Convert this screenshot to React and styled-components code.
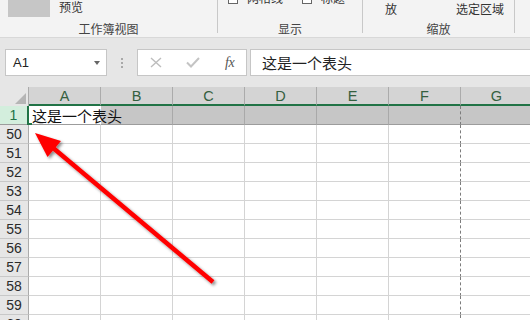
import React from 'react';
import styled, { createGlobalStyle } from 'styled-components';

const Global = createGlobalStyle`
  html, body { margin: 0; padding: 0; }
  body {
    width: 530px; height: 320px; overflow: hidden; background: #fff;
    font-family: "Noto Sans CJK SC", "Noto Sans", sans-serif;
  }
`;

const Page = styled.div`
  position: relative;
  width: 530px;
  height: 320px;
  overflow: hidden;
  display: flex;
  flex-direction: column;
`;

/* ---------- Ribbon ---------- */
const Ribbon = styled.div`
  flex: none;
  height: 37px;
  background: #f3f3f3;
  border-bottom: 1px solid #d8d8d8;
  display: flex;
  overflow: hidden;
`;

const Group = styled.div`
  flex: none;
  width: ${p => p.$w}px;
  display: flex;
  flex-direction: column;
`;

const GroupTop = styled.div`
  height: 22px;
  display: flex;
  align-items: flex-start;
  padding-left: ${p => p.$pl || 0}px;
  gap: ${p => p.$gap || 0}px;
`;

const GroupLabel = styled.div`
  height: 14px;
  line-height: 14px;
  font-size: 12px;
  color: #444;
  text-align: center;
`;

const Sep = styled.div`
  flex: none;
  width: 1px;
  height: 33px;
  background: #c8c8c8;
`;

const IconTile = styled.div`
  width: 42px;
  height: 17px;
  background: #c6c6c6;
`;

const RibbonText = styled.span`
  font-size: 12px;
  line-height: 14px;
  color: #333;
  margin-top: ${p => p.$mt || 0}px;
  white-space: nowrap;
`;

const CheckRow = styled.div`
  display: flex;
  align-items: center;
  height: 14px;
  margin-top: -9px;
  margin-right: ${p => p.$mr || 0}px;
  gap: 9px;
`;

const CheckBox = styled.span`
  width: 8px;
  height: 8px;
  margin-top: 2px;
  border: 1px solid #666;
  background: #fff;
`;

/* ---------- Formula bar ---------- */
const FormulaArea = styled.div`
  flex: none;
  height: 49px;
  background: #e6e6e6;
  display: flex;
  align-items: flex-start;
  padding: 11px 0 0 5px;
  box-sizing: border-box;
`;

const NameBox = styled.div`
  width: 102px;
  height: 27px;
  box-sizing: border-box;
  background: #fff;
  border: 1px solid #c6c6c6;
  display: flex;
  align-items: center;
  padding: 0 6px 0 7px;
  font-family: "Liberation Sans", Arial, sans-serif;
  font-size: 13px;
  color: #222;
`;

const Drop = styled.span`
  margin-left: auto;
  width: 0;
  height: 0;
  border-left: 3.5px solid transparent;
  border-right: 3.5px solid transparent;
  border-top: 4px solid #666;
`;

const Dots = styled.div`
  width: 30px;
  height: 27px;
  display: flex;
  flex-direction: column;
  align-items: center;
  justify-content: center;
  gap: 2px;
  & > span {
    width: 2px;
    height: 2px;
    background: #a8a8a8;
  }
`;

const FxBox = styled.div`
  width: 110px;
  height: 27px;
  box-sizing: border-box;
  background: #fff;
  border: 1px solid #c6c6c6;
  display: flex;
  align-items: center;
  padding-left: 12px;
  gap: 24px;
`;

const Fx = styled.span`
  font-family: "Liberation Serif", "Times New Roman", serif;
  font-style: italic;
  font-size: 14px;
  color: #555;
  margin-left: 1px;
  letter-spacing: -0.5px;
`;

const FormulaInput = styled.div`
  flex: 1;
  margin-left: 3px;
  height: 27px;
  box-sizing: border-box;
  background: #fff;
  border: 1px solid #c6c6c6;
  border-right: none;
  display: flex;
  align-items: center;
  padding-left: 11px;
  font-size: 15px;
  color: #222;
  white-space: nowrap;
`;

/* ---------- Grid ---------- */
const Sheet = styled.div`
  flex: 1;
  display: flex;
  flex-direction: column;
  overflow: hidden;
`;

const Row = styled.div`
  flex: none;
  display: flex;
  height: 19px;
`;

const Corner = styled.div`
  flex: none;
  width: 29px;
  box-sizing: border-box;
  background: #e6e6e6;
  border-right: 1px solid #ababab;
  display: flex;
  align-items: flex-end;
  justify-content: flex-end;
  padding: 0 2px 2px 0;
`;

const ColHead = styled.div`
  flex: none;
  width: 72px;
  box-sizing: border-box;
  background: #d4d4d4;
  border-right: 1px solid #ababab;
  border-bottom: 2px solid #217346;
  display: flex;
  align-items: center;
  justify-content: center;
  padding-top: 1px;
  font-family: "Liberation Sans", Arial, sans-serif;
  font-size: 14.5px;
  color: #35603f;
`;

const RowHead = styled.div`
  flex: none;
  width: 29px;
  box-sizing: border-box;
  background: ${p => (p.$sel ? '#d3eedd' : '#e6e6e6')};
  border-right: ${p => (p.$sel ? '2px solid #217346' : '1px solid #ababab')};
  border-bottom: 1px solid ${p => (p.$sel ? '#9c9c9c' : '#c8c8c8')};
  display: flex;
  align-items: center;
  justify-content: center;
  font-family: "Liberation Sans", Arial, sans-serif;
  font-size: 14px;
  color: ${p => (p.$sel ? '#217346' : '#2a2a2a')};
`;

const Cell = styled.div`
  flex: none;
  width: 72px;
  box-sizing: border-box;
  background: ${p => (p.$sel ? '#c6c6c6' : '#fff')};
  border-right: 1px ${p => (p.$dash ? 'dashed #7c7c7c' : `solid ${p.$sel ? '#a9a9a9' : '#d4d4d4'}`)};
  border-bottom: 1px solid ${p => (p.$sel ? '#9c9c9c' : '#d4d4d4')};
`;

const ActiveCell = styled.div`
  flex: none;
  width: 72px;
  box-sizing: border-box;
  position: relative;
  background: #fff;
  border-right: 1px solid #fff;
  border-bottom: 1px solid #9c9c9c;
  display: flex;
  align-items: center;
  padding-left: 3px;
  white-space: nowrap;
  font-size: 15px;
  color: #111;
  &::after {
    content: '';
    position: absolute;
    left: -2px;
    bottom: -1px;
    width: 5px;
    height: 2px;
    background: #217346;
  }
`;

const Overflow = styled.span`
  position: relative;
  z-index: 1;
`;

const ArrowLayer = styled.svg`
  position: absolute;
  left: 0;
  top: 0;
  pointer-events: none;
`;

const cols = ['A', 'B', 'C', 'D', 'E', 'F', 'G'];
const rows = [50, 51, 52, 53, 54, 55, 56, 57, 58, 59, 60];

export default function App() {
  return (
    <Page>
      <Global />
      <Ribbon>
        <Group $w={217}>
          <GroupTop $pl={8} $gap={9}>
            <IconTile />
            <RibbonText>预览</RibbonText>
          </GroupTop>
          <GroupLabel>工作簿视图</GroupLabel>
        </Group>
        <Sep />
        <Group $w={144}>
          <GroupTop $pl={10}>
            <CheckRow $mr={19}>
              <CheckBox />
              <RibbonText>网格线</RibbonText>
            </CheckRow>
            <CheckRow>
              <CheckBox />
              <RibbonText>标题</RibbonText>
            </CheckRow>
          </GroupTop>
          <GroupLabel>显示</GroupLabel>
        </Group>
        <Sep />
        <Group $w={151}>
          <GroupTop $pl={22} $gap={59}>
            <RibbonText $mt={2}>放</RibbonText>
            <RibbonText $mt={2}>选定区域</RibbonText>
          </GroupTop>
          <GroupLabel>缩放</GroupLabel>
        </Group>
        <Sep />
      </Ribbon>

      <FormulaArea>
        <NameBox>
          A1
          <Drop />
        </NameBox>
        <Dots>
          <span />
          <span />
          <span />
        </Dots>
        <FxBox>
          <svg width="12" height="11" viewBox="0 0 12 11">
            <path d="M1 1 L11 10 M11 1 L1 10" stroke="#bdbdbd" strokeWidth="1.4" fill="none" />
          </svg>
          <svg width="14" height="11" viewBox="0 0 14 11">
            <path d="M1 5.5 L5 9.5 L13 1" stroke="#c4c4c4" strokeWidth="2" fill="none" />
          </svg>
          <Fx>fx</Fx>
        </FxBox>
        <FormulaInput>这是一个表头</FormulaInput>
      </FormulaArea>

      <Sheet>
        <Row>
          <Corner>
            <svg width="11" height="11" viewBox="0 0 11 11">
              <path d="M11 0 L11 11 L0 11 Z" fill="#b5b5b5" />
            </svg>
          </Corner>
          {cols.map(c => (
            <ColHead key={c}>{c}</ColHead>
          ))}
        </Row>
        <Row>
          <RowHead $sel>1</RowHead>
          <ActiveCell>
            <Overflow>这是一个表头</Overflow>
          </ActiveCell>
          {cols.slice(1).map(c => (
            <Cell key={c} $sel $dash={c === 'F'} />
          ))}
        </Row>
        {rows.map(r => (
          <Row key={r}>
            <RowHead>{r}</RowHead>
            {cols.map(c => (
              <Cell key={c} $dash={c === 'F'} />
            ))}
          </Row>
        ))}
      </Sheet>

      <ArrowLayer width="530" height="320" viewBox="0 0 530 320">
        <defs>
          <filter id="shadow" x="-20%" y="-20%" width="140%" height="140%">
            <feDropShadow dx="2" dy="2" stdDeviation="1.6" floodColor="#000" floodOpacity="0.45" />
          </filter>
        </defs>
        <g filter="url(#shadow)">
          <line x1="213" y1="282" x2="52" y2="147" stroke="#ff0000" strokeWidth="4.5" />
          <polygon points="35,133 61,141 47.5,157" fill="#ff0000" />
        </g>
      </ArrowLayer>
    </Page>
  );
}
